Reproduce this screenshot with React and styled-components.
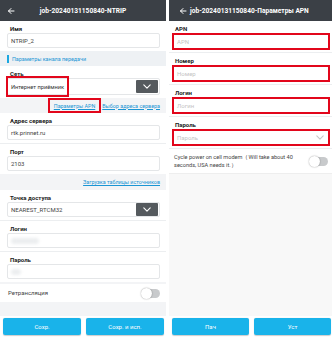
import React from "react";
import styled, { createGlobalStyle, css } from "styled-components";

const Global = createGlobalStyle`
  html, body { margin: 0; padding: 0; background: #fff; }
  body { font-family: Roboto, "Noto Sans", "Liberation Sans", sans-serif; }
  * { box-sizing: border-box; }
`;

const Stage = styled.div`
  display: flex;
  gap: 3px;
  width: 334px;
  height: 339px;
  background: #fff;
`;

const Phone = styled.div`
  display: flex;
  flex-direction: column;
  width: ${(p) => p.$w}px;
  height: 339px;
  background: ${(p) => p.$bg || "#f4f5f7"};
  overflow: hidden;
`;

const Header = styled.div`
  flex: none;
  height: 21px;
  background: #3b4046;
  display: flex;
  align-items: center;
  padding: 0 ${(p) => p.$pad || 6}px;
  color: #fff;
`;

const Back = styled.svg`
  flex: none;
  width: 8px;
  height: 8px;
`;

const Title = styled.div`
  flex: 1;
  text-align: ${(p) => p.$align || "center"};
  padding-left: ${(p) => p.$indent || 0}px;
  font-size: 6.6px;
  font-weight: 700;
  white-space: nowrap;
  letter-spacing: 0;
`;

const Field = styled.div`
  background: #fff;
  padding: ${(p) => p.$pad || "3px 6px 3px 7px"};
  border-bottom: ${(p) => (p.$sep ? "1px solid #eceef0" : "none")};
`;

const Label = styled.div`
  font-size: 6px;
  font-weight: 700;
  line-height: 9px;
  color: #222;
  padding-left: 3px;
  height: 9px;
`;

const InputBox = styled.div`
  position: relative;
  height: ${(p) => p.$h || 15}px;
  border: 1px solid #e4e6e8;
  border-radius: 2px;
  padding: 0 4px 0 3px;
  display: flex;
  align-items: center;
  font-size: 6px;
  color: #444;
  background: #fff;
  ${(p) =>
    p.$red &&
    css`
      border: 2px solid #e2061b;
      border-radius: 0;
      color: #c4c4c4;
    `}
`;

const Value = styled.span`
  flex: 1;
  white-space: nowrap;
`;

const Highlighted = styled.span`
  flex: none;
  align-self: stretch;
  display: flex;
  align-items: center;
  margin: -3px 0 -3px -5px;
  padding: 0 3px;
  border: 2px solid #e2061b;
  white-space: nowrap;
  font-size: 5.7px;
  color: #333;
`;

const DropButton = styled.div`
  flex: none;
  width: 22px;
  height: 13px;
  margin-right: -3px;
  border-radius: 1px;
  background: #555a5e;
  display: flex;
  align-items: center;
  justify-content: center;
`;

const Blur = styled.span`
  display: inline-block;
  width: ${(p) => p.$w}px;
  height: 6px;
  border-radius: 3px;
  background: #eceef0;
  filter: blur(1.5px);
`;

const SectionHeader = styled.div`
  height: 15px;
  display: flex;
  align-items: center;
  gap: 3px;
  padding-left: 7px;
  background: #eef1f4;
  font-size: 5.4px;
  color: #1b95d4;
`;

const Bar = styled.span`
  width: 2px;
  height: 8px;
  background: #1ba7e0;
`;

const LinkRow = styled.div`
  height: ${(p) => p.$h || 15}px;
  display: flex;
  align-items: center;
  justify-content: flex-end;
  gap: 1px;
  padding-right: 6px;
  background: #f3f4f6;
`;

const Link = styled.span`
  font-size: 5.4px;
  color: #1b95d4;
  text-decoration: underline;
  white-space: nowrap;
  ${(p) =>
    p.$red &&
    css`
      height: 15px;
      display: flex;
      align-items: center;
      padding: 0 4px;
      border: 2px solid #e2061b;
    `}
`;

const Gap = styled.div`
  height: ${(p) => p.$h}px;
  background: ${(p) => p.$bg || "#f3f4f6"};
  flex: ${(p) => (p.$grow ? 1 : "none")};
`;

const ToggleRow = styled.div`
  display: flex;
  align-items: center;
  justify-content: space-between;
  background: #fff;
  height: ${(p) => p.$h}px;
  padding: ${(p) => p.$pad || "0 6px 0 8px"};
  font-size: ${(p) => p.$fs || 6}px;
  line-height: 8px;
  color: #444;
`;

const ToggleText = styled.span`
  max-width: ${(p) => p.$max || 200}px;
`;

const Switch = styled.span`
  position: relative;
  flex: none;
  width: 18px;
  height: 9px;
  border-radius: 5px;
  background: #c8cacc;
  &::after {
    content: "";
    position: absolute;
    left: -1px;
    top: -1px;
    width: 11px;
    height: 11px;
    border-radius: 50%;
    background: #fff;
    box-shadow: 0 0 1.5px rgba(0, 0, 0, 0.45);
  }
`;

const Footer = styled.div`
  margin-top: auto;
  flex: none;
  display: grid;
  grid-template-columns: 1fr 1fr;
  gap: 5px;
  padding: 2px ${(p) => p.$pr || 2}px 4px ${(p) => p.$pl || 3}px;
  background: #fff;
`;

const Button = styled.div`
  height: 17px;
  border-radius: 2px;
  background: #19b3ea;
  box-shadow: 0 0.5px 1px rgba(0, 0, 0, 0.2);
  color: #fff;
  font-size: 6px;
  display: flex;
  align-items: center;
  justify-content: center;
`;

const ArrowIcon = () => (
  <Back viewBox="0 0 16 16" fill="none" stroke="#fff" strokeWidth="2" strokeLinecap="round" strokeLinejoin="round">
    <path d="M14 8H3M8 3L3 8l5 5" />
  </Back>
);

const Chevron = ({ color = "#fff", w = 8 }) => (
  <svg width={w} height={w / 2 + 1} viewBox="0 0 10 6" fill="none" stroke={color} strokeWidth="1.4" strokeLinecap="round" strokeLinejoin="round">
    <path d="M1 1l4 4 4-4" />
  </svg>
);

const Text = ({ label, value, sep, children }) => (
  <Field $sep={sep}>
    <Label>{label}</Label>
    <InputBox>{children || <Value>{value}</Value>}</InputBox>
  </Field>
);

const RedField = ({ label, placeholder, chevron }) => (
  <Field $sep $pad="3px 2px 2px 3px">
    <Label>{label}</Label>
    <InputBox $red $h={17}>
      <Value>{placeholder}</Value>
      {chevron && <Chevron color="#c8c8c8" w={8} />}
    </InputBox>
  </Field>
);

const LeftPhone = () => (
  <Phone $w={166}>
    <Header $pad={7}>
      <ArrowIcon />
      <Title>job-20240131150840-NTRIP</Title>
      <span style={{ width: 8 }} />
    </Header>
    <Text label="Имя" value="NTRIP_2" />
    <SectionHeader>
      <Bar />
      Параметры канала передачи
    </SectionHeader>
    <Field>
      <Label>Сеть</Label>
      <InputBox $h={17}>
        <Highlighted>Интернет приёмник</Highlighted>
        <Value />
        <DropButton>
          <Chevron />
        </DropButton>
      </InputBox>
    </Field>
    <LinkRow>
      <Link $red>Параметры APN</Link>
      <Link>Выбор адреса сервера</Link>
    </LinkRow>
    <Text label="Адрес сервера" value="rtk.prinnet.ru" sep />
    <Text label="Порт" value="2103" />
    <LinkRow $h={16}>
      <Link>Загрузка таблицы источников</Link>
    </LinkRow>
    <Field $sep>
      <Label>Точка доступа</Label>
      <InputBox>
        <Value>NEAREST_RTCM32</Value>
        <DropButton>
          <Chevron />
        </DropButton>
      </InputBox>
    </Field>
    <Text label="Логин" sep>
      <Blur $w={28} />
    </Text>
    <Text label="Пароль">
      <Blur $w={10} />
    </Text>
    <Gap $h={2} />
    <ToggleRow $h={18}>
      <span>Ретрансляция</span>
      <Switch />
    </ToggleRow>
    <Gap $h={14} $grow />
    <Footer>
      <Button>Сохр.</Button>
      <Button>Сохр. и исп.</Button>
    </Footer>
  </Phone>
);

const RightPhone = () => (
  <Phone $w={163} $bg="#f8f8f8">
    <Header $pad={10}>
      <ArrowIcon />
      <Title $align="left" $indent={3}>job-20240131150840-Параметры APN</Title>
    </Header>
    <RedField label="APN" placeholder="APN" />
    <RedField label="Номер" placeholder="Номер" />
    <RedField label="Логин" placeholder="Логин" />
    <RedField label="Пароль" placeholder="Пароль" chevron />
    <ToggleRow $h={24} $pad="0 4px 0 5px" $fs={5.6}>
      <ToggleText $max={128}>
        Cycle power on cell modem（Will take about 40 seconds, USA needs it.）
      </ToggleText>
      <Switch />
    </ToggleRow>
    <Gap $h={1} $bg="#eeeeee" />
    <Gap $h={10} $bg="#f8f8f8" $grow />
    <Footer $pl={3} $pr={1}>
      <Button>Пач</Button>
      <Button>Уст</Button>
    </Footer>
  </Phone>
);

export default function App() {
  return (
    <>
      <Global />
      <Stage>
        <LeftPhone />
        <RightPhone />
      </Stage>
    </>
  );
}
